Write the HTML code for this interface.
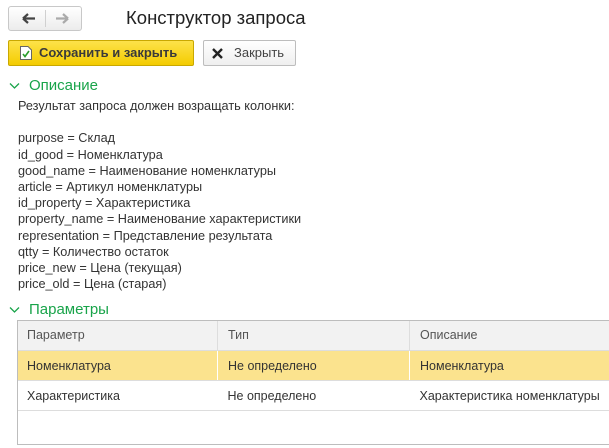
<!DOCTYPE html><html><head><meta charset="utf-8"><style>
body{margin:0;width:609px;height:448px;background:#fff;font-family:"Liberation Sans",Arial,sans-serif;position:relative;overflow:hidden;color:#333}
.a{position:absolute}
.nav{left:8px;top:6px;width:72px;height:23px;border:1px solid #c8c8c8;border-radius:3px;background:linear-gradient(#fff,#ececec)}
.nav i{position:absolute;left:36px;top:3px;width:1px;height:17px;background:#d0d0d0}
.btn{top:40px;height:24px;border-radius:2px;font-size:13px;line-height:24px}
.save{left:8px;width:184px;background:linear-gradient(#fde24a,#f4cc00);border:1px solid #c9a800;color:#333}
.close{left:203px;width:91px;border:1px solid #bdbdbd;background:linear-gradient(#fff,#efefef)}
.sec{font-size:15px;color:#19a44a}
.desc{left:18px;top:98px;font-size:12.7px;line-height:16.2px;color:#333;white-space:pre}
table{position:absolute;left:17px;top:320px;width:600px;border-collapse:collapse;font-size:12.5px}
td{height:29px;padding:0 10px;border-right:1px solid #ddd;border-bottom:1px solid #ddd;color:#333}
.tb{left:17px;top:320px;width:600px;height:125px;border:1px solid #bdbdbd;box-sizing:border-box}
</style></head><body>
<div class="a nav"><i></i>
<svg class="a" style="left:13px;top:6px" width="14" height="11"><path d="M1 5.5H13M1 5.5L6 1M1 5.5L6 10" stroke="#444" stroke-width="2.2" fill="none"/></svg>
<svg class="a" style="left:46px;top:6px" width="14" height="11"><path d="M1 5.5H13M13 5.5L8 1M13 5.5L8 10" stroke="#aaa" stroke-width="2.2" fill="none"/></svg>
</div>
<div class="a" style="left:126px;top:7px;font-size:18.5px;color:#222">Конструктор запроса</div>
<div class="a btn save"><svg class="a" style="left:11px;top:5px" width="12" height="14"><path d="M0.5 0.5H8L11.5 4V13.5H0.5Z" fill="#fff" stroke="#666"/><path d="M3 8L5 10.5L9 5" stroke="#2a9d2a" stroke-width="1.6" fill="none"/></svg><span class="a" style="left:30px;font-weight:bold;color:#3a3a3a">Сохранить и закрыть</span></div>
<div class="a btn close"><svg class="a" style="left:8px;top:7px" width="11" height="11"><path d="M1 1L10 10M10 1L1 10" stroke="#222" stroke-width="2.4"/></svg><span class="a" style="left:30px;color:#444">Закрыть</span></div>
<svg class="a" style="left:9px;top:82px" width="11" height="8"><path d="M1 1.5L5.5 6L10 1.5" stroke="#19a44a" stroke-width="1.3" fill="none"/></svg>
<div class="a sec" style="left:29px;top:77px">Описание</div>
<div class="a desc">Результат запроса должен возращать колонки:

purpose = Склад
id_good = Номенклатура
good_name = Наименование номенклатуры
article = Артикул номенклатуры
id_property = Характеристика
property_name = Наименование характеристики
representation = Представление результата
qtty = Количество остаток
price_new = Цена (текущая)
price_old = Цена (старая)</div>
<svg class="a" style="left:9px;top:306px" width="11" height="8"><path d="M1 1.5L5.5 6L10 1.5" stroke="#19a44a" stroke-width="1.3" fill="none"/></svg>
<div class="a sec" style="left:29px;top:301px">Параметры</div>
<table>
<tr style="background:#f2f2f2"><td style="width:180px;height:30px;color:#555">Параметр</td><td style="width:171px;color:#555">Тип</td><td style="color:#555">Описание</td></tr>
<tr style="background:#fbe38e"><td style="border-right-color:#fff">Номенклатура</td><td style="border-right-color:#fff">Не определено</td><td>Номенклатура</td></tr>
<tr><td style="border-right:none">Характеристика</td><td style="border-right:none">Не определено</td><td style="border-right:none">Характеристика номенклатуры</td></tr>
</table>
<div class="a tb"></div>
</body></html>
